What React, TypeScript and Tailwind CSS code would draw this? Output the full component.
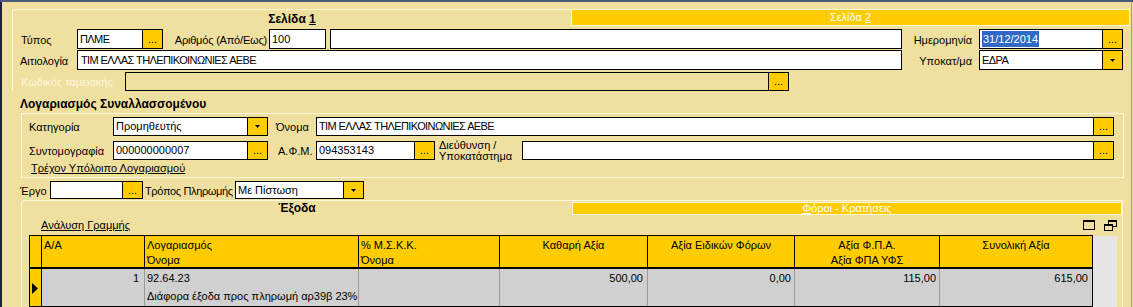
import type { ReactNode } from 'react'

const Field = ({ className, children }: { className: string; children?: ReactNode }) => (
  <div className={`flex h-full items-center overflow-hidden whitespace-nowrap border border-black pl-[2px] ${className}`}>
    {children}
  </div>
)

const Dots = () => (
  <div className="flex h-full w-[20px] shrink-0 items-center justify-center border border-l-0 border-black bg-[#FFCC00] leading-none">
    ...
  </div>
)

const Arrow = () => (
  <div className="flex h-full w-[20px] shrink-0 items-center justify-center border border-l-0 border-black bg-[#FFCC00]">
    <svg width="5" height="3" viewBox="0 0 5 3">
      <polygon points="0,0 5,0 2.5,3" fill="black" />
    </svg>
  </div>
)

const Label = ({ className, children }: { className: string; children: ReactNode }) => (
  <div className={`flex h-full shrink-0 items-center whitespace-nowrap pt-[2px] ${className}`}>{children}</div>
)

const caps = 'tracking-[-0.6px]'

const headCells = [
  { t: ['A/A'], c: 'text-left' },
  { t: ['Λογαριασμός', 'Όνομα'], c: 'text-left' },
  { t: ['% Μ.Σ.Κ.Κ.', 'Όνομα'], c: 'text-left' },
  { t: ['Καθαρή Αξία'], c: 'text-center' },
  { t: ['Αξία Ειδικών Φόρων'], c: 'text-center' },
  { t: ['Αξία Φ.Π.Α.', 'Αξία ΦΠΑ ΥΦΣ'], c: 'text-center' },
  { t: ['Συνολική Αξία'], c: 'text-center' },
]

const App = () => {
  return (
    <div className="h-[307px] w-[1133px] overflow-hidden bg-[#F0E0A0] font-['Liberation_Sans',Arial,sans-serif] text-[11px] text-black">
      <div className="h-[2px] bg-[#4B5A7A]" />
      <div className="flex h-[305px]">
        <div className="w-[2px] shrink-0 bg-[#1C2244]" />
        <div className="flex w-[1130px] flex-col border-r border-[#A89C74] pl-[10px] pt-[7px]">
          {/* page tabs */}
          <div className="flex h-[18px]">
            <div className="flex w-[559px] items-center justify-center rounded-tl-[3px] border-l border-t border-[#FFF8D8] text-[12px] font-bold">
              Σελίδα&nbsp;<span className="underline">1</span>
            </div>
            <div className="flex h-[17px] w-[559px] items-center justify-center border border-[#FFF8D8] bg-[#FFCC00] text-white">
              Σελίδα&nbsp;<span className="underline">2</span>
            </div>
          </div>

          <div className="border-l border-[#FFF8D8] pl-[7px]">
            <div className="mt-[2px] flex h-[20px]">
              <Label className="w-[57px] pl-[1px]">Τύπος</Label>
              <Field className={`w-[66px] bg-white ${caps}`}>ΠΛΜΕ</Field>
              <Dots />
              <Label className="w-[106px] justify-end pr-[2px] tracking-[-0.2px]">Αριθμός (Από/Εως)</Label>
              <Field className="w-[57px] bg-white">100</Field>
              <Field className="ml-[4px] w-[572px] bg-white" />
              <Label className="w-[77px] justify-end pr-[7px]">Ημερομηνία</Label>
              <Field className="w-[124px] bg-white">
                <span className="bg-[#3169C6] px-[1px] text-white">31/12/2014</span>
              </Field>
              <Dots />
            </div>
            <div className="mt-[1px] flex h-[20px]">
              <Label className="w-[57px]">Αιτιολογία</Label>
              <Field className={`w-[825px] bg-white pl-[3px] ${caps}`}>ΤΙΜ ΕΛΛΑΣ ΤΗΛΕΠΙΚΟΙΝΩΝΙΕΣ ΑΕΒΕ</Field>
              <Label className="w-[77px] justify-end pr-[7px]">Υποκατ/μα</Label>
              <Field className={`w-[124px] bg-white ${caps}`}>ΕΔΡΑ</Field>
              <Arrow />
            </div>
            <div className="mt-[2px] flex h-[19px]">
              <Label className="w-[105px] pl-[1px] text-[#FFF6DC]">Κωδικός ταμειακής</Label>
              <Field className="w-[644px] bg-transparent" />
              <Dots />
            </div>
          </div>

          <div className="mt-[6px] h-[14px] pl-[8px] text-[12px] font-bold leading-[14px]">Λογαριασμός Συναλλασσομένου</div>

          {/* counterparty group */}
          <div className="ml-[9px] mt-[2px] h-[65px] w-[1103px] border border-[#FFF8D8] pl-[7px] pt-[3px]">
            <div className="flex h-[19px]">
              <Label className="w-[84px]">Κατηγορία</Label>
              <Field className="w-[135px] bg-white">Προμηθευτής</Field>
              <Arrow />
              <Label className="w-[48px] pl-[8px]">Όνομα</Label>
              <Field className={`w-[778px] bg-white ${caps}`}>ΤΙΜ ΕΛΛΑΣ ΤΗΛΕΠΙΚΟΙΝΩΝΙΕΣ ΑΕΒΕ</Field>
              <Dots />
            </div>
            <div className="mt-[5px] flex h-[19px]">
              <Label className="w-[84px]">Συντομογραφία</Label>
              <Field className="w-[135px] bg-white">000000000007</Field>
              <Dots />
              <Label className="w-[48px] pl-[10px]">Α.Φ.Μ.</Label>
              <Field className="w-[99px] bg-white">094353143</Field>
              <Dots />
              <div className="flex h-full w-[87px] shrink-0 flex-col justify-center pl-[4px] pt-[1px] leading-[11px]">
                <span>Διεύθυνση /</span>
                <span>Υποκατάστημα</span>
              </div>
              <Field className="w-[572px] bg-white" />
              <Dots />
            </div>
            <div className="mt-[2px] pl-[2px] leading-[13px] underline">Τρέχον Υπόλοιπο Λογαριασμού</div>
          </div>

          <div className="mt-[3px] flex h-[18px] pl-[8px]">
            <Label className="w-[30px] pt-[1px]">Έργο</Label>
            <Field className="w-[73px] bg-white" />
            <Dots />
            <Label className="w-[92px] pl-[2px] pt-[1px] tracking-[-0.35px]">Τρόπος Πληρωμής</Label>
            <Field className="w-[109px] bg-white">Με Πίστωση</Field>
            <Arrow />
          </div>

          {/* lines group */}
          <div className="ml-[9px] mt-[1px] flex w-[1102px] flex-1 flex-col rounded-tl-[4px] border-l border-r border-t border-[#FFF8D8]">
            <div className="flex h-[14px]">
              <div className="flex w-[550px] items-center justify-center text-[12px] font-bold leading-none">Έξοδα</div>
              <div className="mt-[1px] flex flex-1 items-center justify-center border border-[#FFF8D8] bg-[#FFCC00] leading-none text-white">
                <span className="underline">Φ</span>όροι - Κρατήσεις
              </div>
            </div>
            <div className="flex h-[20px] items-center pl-[19px] pr-[5px]">
              <span className="underline">Ανάλυση Γραμμής</span>
              <div className="ml-auto flex items-center gap-[9px]">
                <svg width="12" height="10" viewBox="0 0 12 10">
                  <rect x="0.5" y="0.5" width="11" height="9" fill="none" stroke="black" />
                  <rect x="0" y="0" width="12" height="2" fill="black" />
                </svg>
                <svg width="13" height="11" viewBox="0 0 13 11">
                  <rect x="4.5" y="0.5" width="8" height="6" fill="none" stroke="black" />
                  <rect x="4" y="0" width="9" height="2" fill="black" />
                  <rect x="0.5" y="4.5" width="8" height="6" fill="#F0E0A0" stroke="black" />
                  <rect x="0" y="4" width="9" height="2" fill="black" />
                </svg>
              </div>
            </div>
            <div className="flex flex-1 pl-[7px]">
              <div className="w-[1064px]">
                <div className="grid h-[34px] grid-cols-[12px_103px_214px_141px_148px_147px_145px_154px] border-b-2 border-t border-black bg-[#FFCC00]">
                  <div className="border-l border-black" />
                  {headCells.map((h, i) => (
                    <div
                      key={i}
                      className={`border-l border-black px-[2px] pt-[2px] leading-[15px] whitespace-nowrap ${h.c} ${i === headCells.length - 1 ? 'border-r' : ''}`}
                    >
                      {h.t.map((line) => (
                        <div key={line}>{line}</div>
                      ))}
                    </div>
                  ))}
                </div>
                <div className="grid h-[38px] grid-cols-[12px_103px_214px_141px_148px_147px_145px_154px] border-b border-black bg-[#D0D0D0] leading-[18px]">
                  <div className="flex items-center border-l border-black bg-[#FFCC00] pl-[2px] pt-[1px]">
                    <svg width="6" height="11" viewBox="0 0 6 11">
                      <polygon points="0,0 6,5.5 0,11" fill="black" />
                    </svg>
                  </div>
                  <div className="border-l border-black pr-[5px] text-right">1</div>
                  <div className="border-l border-[#9A9A9A] pl-[2px] whitespace-nowrap">
                    <div>92.64.23</div>
                    <div>Διάφορα έξοδα προς πληρωμή αρ39β 23%</div>
                  </div>
                  <div className="border-l border-[#9A9A9A]" />
                  <div className="border-l border-[#9A9A9A] pr-[4px] text-right">500,00</div>
                  <div className="border-l border-[#9A9A9A] pr-[3px] text-right">0,00</div>
                  <div className="border-l border-[#9A9A9A] pr-[3px] text-right">115,00</div>
                  <div className="border-l border-r border-[#9A9A9A] border-r-black pr-[4px] text-right">615,00</div>
                </div>
              </div>
              <div className="mt-[1px] w-[24px] bg-[#E6E6E6]" />
            </div>
          </div>
        </div>
      </div>
    </div>
  )
}

export default App
